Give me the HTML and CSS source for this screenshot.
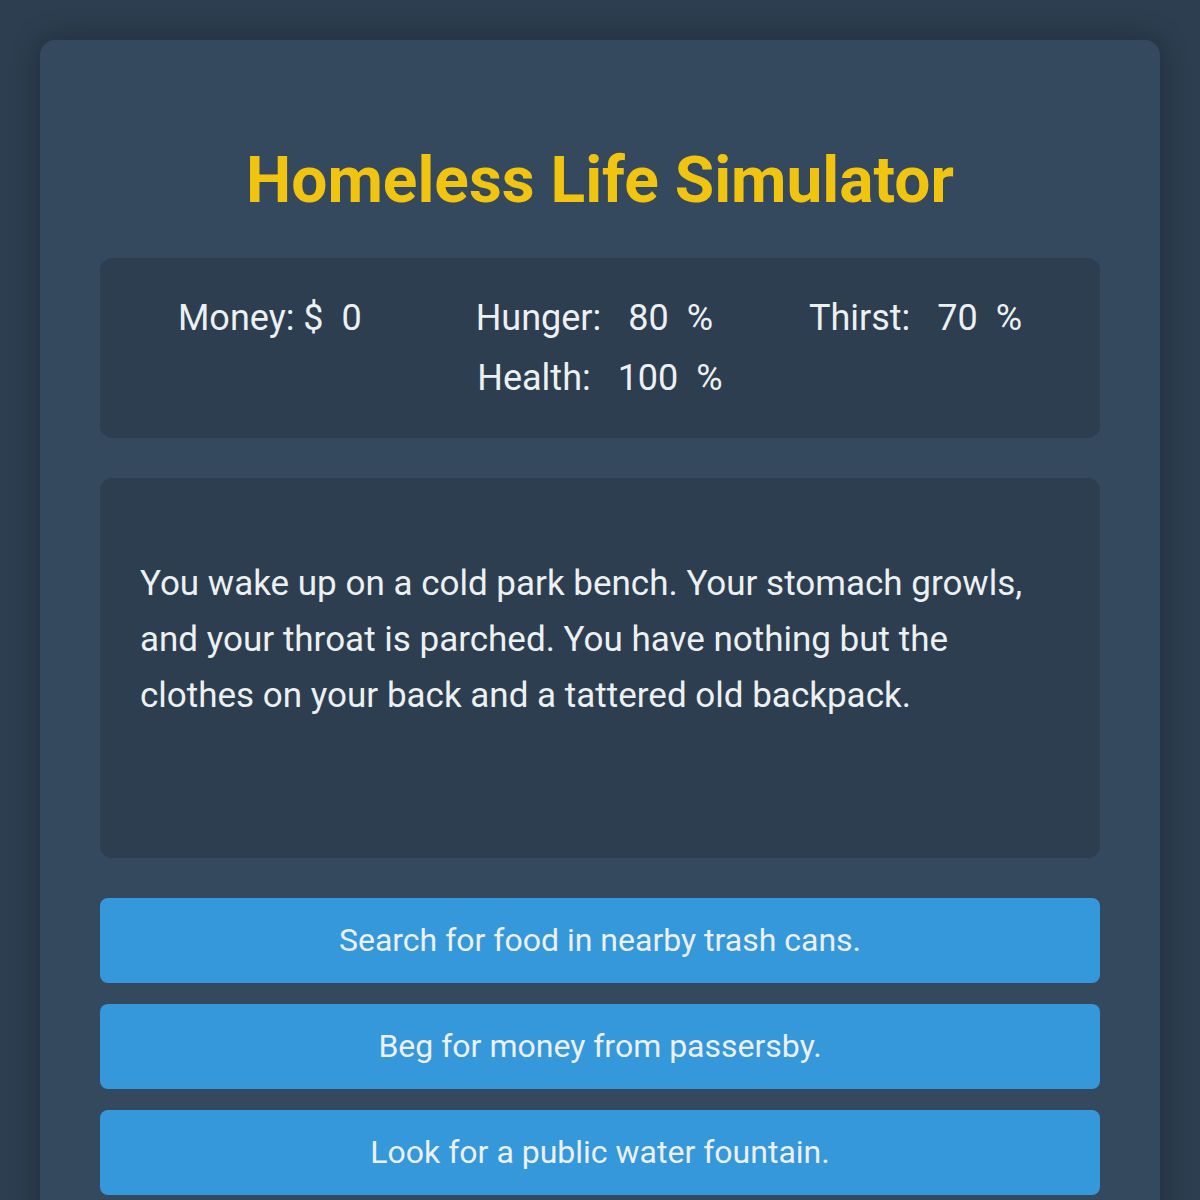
FILE: index.html
```html
<!DOCTYPE html>
<html lang="en">
<head>
  <meta charset="UTF-8">
  <meta name="viewport" content="width=device-width, initial-scale=1.0">
  <title>Homeless Life Simulator</title>
  <link rel="stylesheet" href="styles.css">
</head>
<body>
  <div class="game-container">
    <h1>Homeless Life Simulator</h1>

    <div class="stats">
      <div class="stat">Money: $<span class="val">0</span></div>
      <div class="stat">Hunger: <span class="val">80</span>%</div>
      <div class="stat">Thirst: <span class="val">70</span>%</div>
      <div class="stat">Health: <span class="val">100</span>%</div>
    </div>

    <div class="story">
      <p>You wake up on a cold park bench. Your stomach growls, and your throat is parched. You have nothing but the clothes on your back and a tattered old backpack.</p>
    </div>

    <div class="choices">
      <button class="choice">Search for food in nearby trash cans.</button>
      <button class="choice">Beg for money from passersby.</button>
      <button class="choice">Look for a public water fountain.</button>
    </div>
  </div>
</body>
</html>
```

FILE: styles.css
```css
body {
  font-family: Roboto, "Liberation Sans", sans-serif;
  margin: 0;
  padding: 40px;
  background-color: #2c3e50;
  color: #ecf0f1;
}
.game-container {
  max-width: 1000px;
  margin: 0 auto;
  padding: 60px;
  background-color: #34495e;
  border-radius: 15px;
  box-shadow: 0 0 30px rgba(0, 0, 0, 0.3);
}
h1 {
  color: #f1c40f;
  text-align: center;
  font-size: 64px;
  font-weight: 700;
  margin: 43px 0 38px;
  line-height: 1.2;
}
.stats {
  display: flex;
  flex-wrap: wrap;
  justify-content: space-around;
  background-color: #2c3e50;
  border-radius: 12px;
  padding: 30px;
  font-size: 36px;
  line-height: 60px;
}
.stat {
  margin: 0 15px;
}
.val {
  margin: 0 18px;
}
.story {
  margin-top: 40px;
  background-color: #2c3e50;
  border-radius: 12px;
  padding: 40px;
  min-height: 300px;
  font-size: 35px;
  line-height: 56px;
}
.story p {
  margin: 38px 0;
}
.choices {
  margin-top: 40px;
  display: flex;
  flex-direction: column;
  gap: 21px;
}
.choice {
  font-family: inherit;
  font-size: 32px;
  color: #ecf0f1;
  background-color: #3498db;
  border: none;
  border-radius: 8px;
  height: 85px;
  cursor: pointer;
}
```
